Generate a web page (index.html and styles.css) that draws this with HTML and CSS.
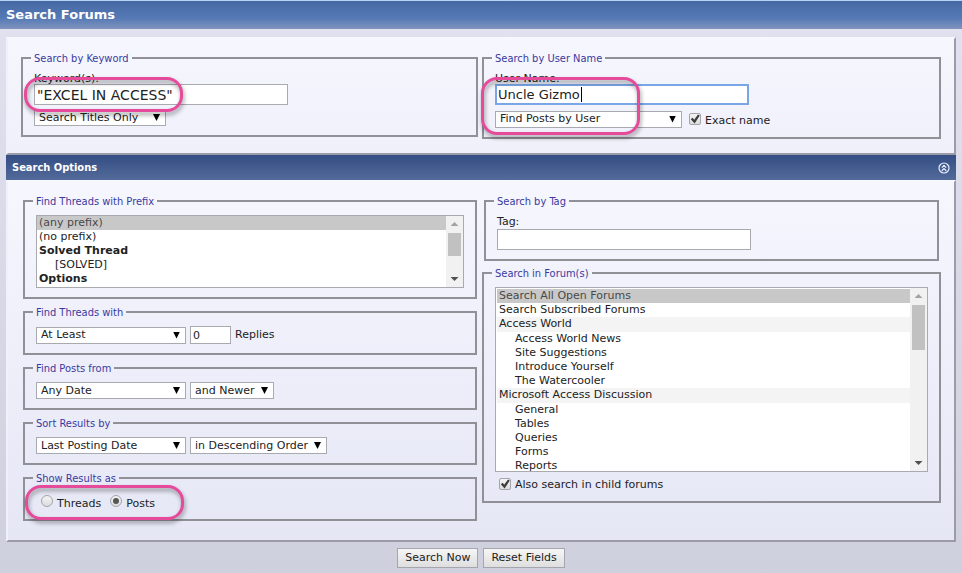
FILE: index.html
```html
<!DOCTYPE html>
<html lang="en">
<head>
  <meta charset="UTF-8" />
  <title>Search Forums</title>
  <link rel="stylesheet" href="styles.css">
</head>
<body>

<h1 class="tcat">Search Forums</h1>

<form class="search-form">
  <!-- Keyword / user name -->
  <div class="panel">
    <div class="columns">
      <fieldset class="tall">
        <legend>Search by Keyword</legend>
        <label for="keyword">Keyword(s):</label>
        <input type="text" class="bginput" id="keyword" value="&quot;EXCEL IN ACCESS&quot;">
        <div class="row">
          <span class="dropdown w-titles">
            <select aria-label="Search in">
              <option>Search Titles Only</option>
              <option>Search Entire Posts</option>
            </select>
          </span>
        </div>
        <div class="marker marker-keyword"></div>
      </fieldset>

      <fieldset class="tall">
        <legend>Search by User Name</legend>
        <label for="username">User Name:</label>
        <div class="typing">
          <input type="text" class="bginput active" id="username" value="Uncle Gizmo">
          <span class="caret"></span>
        </div>
        <div class="row row-user">
          <span class="dropdown w-posts">
            <select aria-label="Find by user">
              <option>Find Posts by User</option>
              <option>Find Threads Started by User</option>
            </select>
          </span>
          <input type="checkbox" id="exact" checked>
          <label for="exact">Exact name</label>
        </div>
        <div class="marker marker-user"></div>
      </fieldset>
    </div>
  </div>

  <!-- Search options -->
  <div class="thead">
    <h2>Search Options</h2>
    <a href="#options" aria-label="Collapse">
      <svg width="12" height="12" viewBox="0 0 12 12" fill="none" stroke="#e8eefa">
        <circle cx="6" cy="6" r="5" stroke-width="1.2" />
        <path d="M3.8 5.6 6 3.4 8.2 5.6M3.8 8.8 6 6.6 8.2 8.8" stroke-width="1.3" />
      </svg>
    </a>
  </div>

  <div class="panel options" id="options">
    <div class="columns">
      <div class="column left">
        <fieldset>
          <legend>Find Threads with Prefix</legend>
          <div class="listbox prefixes">
            <select size="5" multiple aria-label="Prefix">
              <option selected>(any prefix)</option>
              <option>(no prefix)</option>
              <optgroup label="Solved Thread">
                <option>[SOLVED]</option>
              </optgroup>
              <optgroup label="Options"></optgroup>
            </select>
            <div class="scrollbar"><i class="up"></i><i class="thumb"></i><i class="down"></i></div>
          </div>
        </fieldset>

        <fieldset>
          <legend>Find Threads with</legend>
          <div class="row">
            <span class="dropdown w-main">
              <select aria-label="Limit">
                <option>At Least</option>
                <option>At Most</option>
              </select>
            </span>
            <input type="text" class="replies" id="replies" value="0">
            <label for="replies">Replies</label>
          </div>
        </fieldset>

        <fieldset>
          <legend>Find Posts from</legend>
          <div class="row">
            <span class="dropdown w-main">
              <select aria-label="Date">
                <option>Any Date</option>
                <option>Yesterday</option>
              </select>
            </span>
            <span class="dropdown w-newer">
              <select aria-label="Newer or older">
                <option>and Newer</option>
                <option>and Older</option>
              </select>
            </span>
          </div>
        </fieldset>

        <fieldset>
          <legend>Sort Results by</legend>
          <div class="row">
            <span class="dropdown w-main">
              <select aria-label="Sort by">
                <option>Last Posting Date</option>
                <option>Title</option>
              </select>
            </span>
            <span class="dropdown w-order">
              <select aria-label="Order">
                <option>in Descending Order</option>
                <option>in Ascending Order</option>
              </select>
            </span>
          </div>
        </fieldset>

        <fieldset>
          <legend>Show Results as</legend>
          <div class="row radios">
            <input type="radio" name="show" id="threads">
            <label for="threads">Threads</label>
            <input type="radio" name="show" id="posts" checked>
            <label for="posts">Posts</label>
          </div>
          <div class="marker marker-show"></div>
        </fieldset>
      </div>

      <div class="column right">
        <fieldset class="tag">
          <legend>Search by Tag</legend>
          <label for="tag">Tag:</label>
          <input type="text" class="bginput" id="tag">
        </fieldset>

        <fieldset>
          <legend>Search in Forum(s)</legend>
          <div class="listbox forums">
            <select size="13" multiple aria-label="Forums">
              <option selected>Search All Open Forums</option>
              <option>Search Subscribed Forums</option>
              <option class="cat">Access World</option>
              <option class="sub">Access World News</option>
              <option class="sub">Site Suggestions</option>
              <option class="sub">Introduce Yourself</option>
              <option class="sub">The Watercooler</option>
              <option class="cat">Microsoft Access Discussion</option>
              <option class="sub">General</option>
              <option class="sub">Tables</option>
              <option class="sub">Queries</option>
              <option class="sub">Forms</option>
              <option class="sub">Reports</option>
            </select>
            <div class="scrollbar"><i class="up"></i><i class="thumb"></i><i class="down"></i></div>
          </div>
          <div class="row child">
            <input type="checkbox" id="child" checked>
            <label for="child">Also search in child forums</label>
          </div>
        </fieldset>
      </div>
    </div>
  </div>

  <div class="buttons">
    <button type="submit">Search Now</button>
    <button type="reset">Reset Fields</button>
  </div>
</form>

</body>
</html>
```
FILE: styles.css
```css
* {
  box-sizing: border-box;
}

html {
  min-height: 100%;
  background: linear-gradient(#e1e1f0, #cfd0de);
}

body {
  margin: 0;
  border-top: 1px solid #b5d3f7;
  color: #222;
  font: 11px/14px Verdana, "DejaVu Sans", sans-serif;
}

input, select, button {
  margin: 0;
  color: inherit;
  font: inherit;
}

.tcat {
  margin: 0;
  padding: 0 6px;
  background: linear-gradient(#4669a3, #5479b5 60%, #8093be);
  color: #fff;
  font-size: 13px;
  line-height: 28px;
}

.search-form {
  padding: 8px 6px 0;
}

.panel {
  padding: 12px 13px 14px;
  border: 2px solid;
  border-color: #f7f7fd #9c9ca8 #9c9ca8 #f0f0fa;
  background: linear-gradient(#f6f6fe, #f0f0fb);
}

.options {
  padding: 12px 13px 19px;
  background: linear-gradient(#f6f6fe, #e5e7f5);
}

.thead {
  display: flex;
  align-items: center;
  justify-content: space-between;
  height: 25px;
  padding: 0 6px;
  background: linear-gradient(#344d83, #536b9a);
  color: #fff;
}

.thead h2 {
  margin: 0;
  font: bold 11px/14px Tahoma, "DejaVu Sans Condensed", sans-serif;
}

.thead svg {
  display: block;
}

.columns {
  display: grid;
  grid-template-columns: 457fr 459fr;
  gap: 4px;
  align-items: start;
}

.column {
  display: flex;
  flex-direction: column;
  gap: 6px;
}

.left {
  padding: 0 1px 0 2px;
}

.right {
  gap: 5px;
}

fieldset {
  position: relative;
  min-width: 0;
  margin: 0;
  padding: 7px 11px 9px;
  border: 2px solid #909096;
}

.tag {
  margin: 0 2px;
}

legend {
  margin-left: -3px;
  padding: 1px 3px 0;
  color: #3a3a9e;
  font: 11px/13px Tahoma, "DejaVu Sans Condensed", sans-serif;
}

fieldset > label {
  display: block;
}

.tall > label {
  margin-bottom: -2px;
}

.bginput {
  display: block;
  width: 254px;
  height: 21px;
  padding: 0 2px;
  border: 1px solid #a9a9b0;
  background: #fff;
  font-size: 13px;
}

#keyword {
  font-size: 14px;
}

.active {
  border: 2px solid #7aa5e6;
  padding: 0 1px;
  outline: none;
}

.typing {
  position: relative;
}

.caret {
  position: absolute;
  top: 3px;
  left: 86px;
  width: 1px;
  height: 15px;
  background: #000;
}

.row {
  display: flex;
  align-items: center;
  gap: 4px;
}

.tall .row {
  margin-top: 4px;
}

.tall .row-user {
  margin-top: 5px;
}

/* Drop-downs */
.dropdown {
  position: relative;
}

.dropdown select {
  display: block;
  width: 100%;
  height: 17px;
  padding: 0 4px;
  border: 1px solid #a9a9b0;
  border-radius: 0;
  background: #fff;
  appearance: none;
}

.dropdown::after {
  content: "";
  position: absolute;
  top: 5px;
  right: 6px;
  width: 7px;
  height: 7px;
  background: #000;
  clip-path: polygon(0 0, 100% 0, 50% 100%);
  pointer-events: none;
}

.w-titles { width: 132px; }
.w-posts { width: 187px; }
.w-main { width: 150px; }
.w-newer { width: 84px; }
.w-order { width: 137px; }

.replies {
  width: 41px;
  height: 18px;
  padding: 0 2px;
  border: 1px solid #a9a9b0;
}

/* List boxes */
.listbox {
  display: flex;
  border: 1px solid #a9a9b0;
  background: #fff;
}

.listbox select {
  flex: 1;
  min-width: 0;
  padding: 0;
  border: 0;
  border-radius: 0;
  outline: none;
  background: #fff;
  overflow: hidden;
  scrollbar-width: none;
}

.listbox option {
  min-height: 14px;
  padding: 0 2px;
  line-height: 14px;
}

.listbox option:checked {
  background: linear-gradient(#c8c8c8, #c8c8c8);
  -webkit-text-fill-color: #484848;
}

.listbox optgroup option {
  padding-left: 18px;
}

.listbox optgroup option::before {
  content: none;
}

.listbox .cat {
  min-height: 15px;
  background: #f4f4f4;
}

.listbox .sub {
  padding-left: 18px;
}

.forums select {
  padding: 1px 0 0 1px;
}

.prefixes {
  height: 73px;
}

.forums {
  height: 185px;
}

.scrollbar {
  display: flex;
  flex-direction: column;
  align-items: center;
  width: 17px;
  padding: 6px 0;
  background: #f1f1f1;
}

.up, .down {
  width: 8px;
  height: 4px;
  background: #a3a3a3;
  clip-path: polygon(50% 0, 100% 100%, 0 100%);
}

.down {
  margin-top: auto;
  background: #505050;
  clip-path: polygon(0 0, 100% 0, 50% 100%);
}

.thumb {
  width: 13px;
  height: 23px;
  margin-top: 7px;
  background: #c1c1c1;
}

.forums .thumb {
  height: 45px;
}

/* Tick boxes and radios */
input[type="checkbox"], input[type="radio"] {
  flex: none;
  width: 12px;
  height: 12px;
  border: 1px solid #a4a4ac;
  border-radius: 2px;
  background: linear-gradient(#f4f4f4, #dcdcdc);
  appearance: none;
}

input[type="checkbox"]:checked::before {
  content: "";
  display: block;
  height: 10px;
  background: #3c3c3c;
  clip-path: polygon(8% 52%, 26% 38%, 42% 58%, 80% 4%, 98% 16%, 46% 94%);
}

input[type="radio"] {
  border-radius: 50%;
}

input[type="radio"]:checked::before {
  content: "";
  display: block;
  width: 6px;
  height: 6px;
  margin: 2px;
  border-radius: 50%;
  background: #555;
}

.row-user input {
  margin-left: 3px;
}

.row-user label {
  padding-top: 4px;
}

.child {
  height: 24px;
  padding: 0 4px;
  margin-bottom: -4px;
}

.child label {
  padding-top: 2px;
}

.radios {
  height: 18px;
  padding-left: 5px;
}

.radios label {
  padding-top: 5px;
}

.radios label + input {
  margin-left: 5px;
}

/* Pink highlights */
.marker {
  position: absolute;
  left: 1px;
  width: 159px;
  height: 35px;
  border: 3px solid #e64a9b;
  border-radius: 16px;
  filter: drop-shadow(1px 3px 2px rgba(0, 0, 0, 0.4));
  pointer-events: none;
}

.marker-keyword {
  top: 12px;
}

.marker-user {
  top: 12px;
  left: -3px;
  height: 58px;
}

.marker-show {
  top: 0;
  left: 0;
}

.buttons {
  display: flex;
  justify-content: center;
  gap: 5px;
  padding: 6px 0;
}

button {
  height: 20px;
  padding: 0 7px;
  border: 1px solid #a5a5ad;
  background: linear-gradient(#f6f6f6, #dedede);
}
```
